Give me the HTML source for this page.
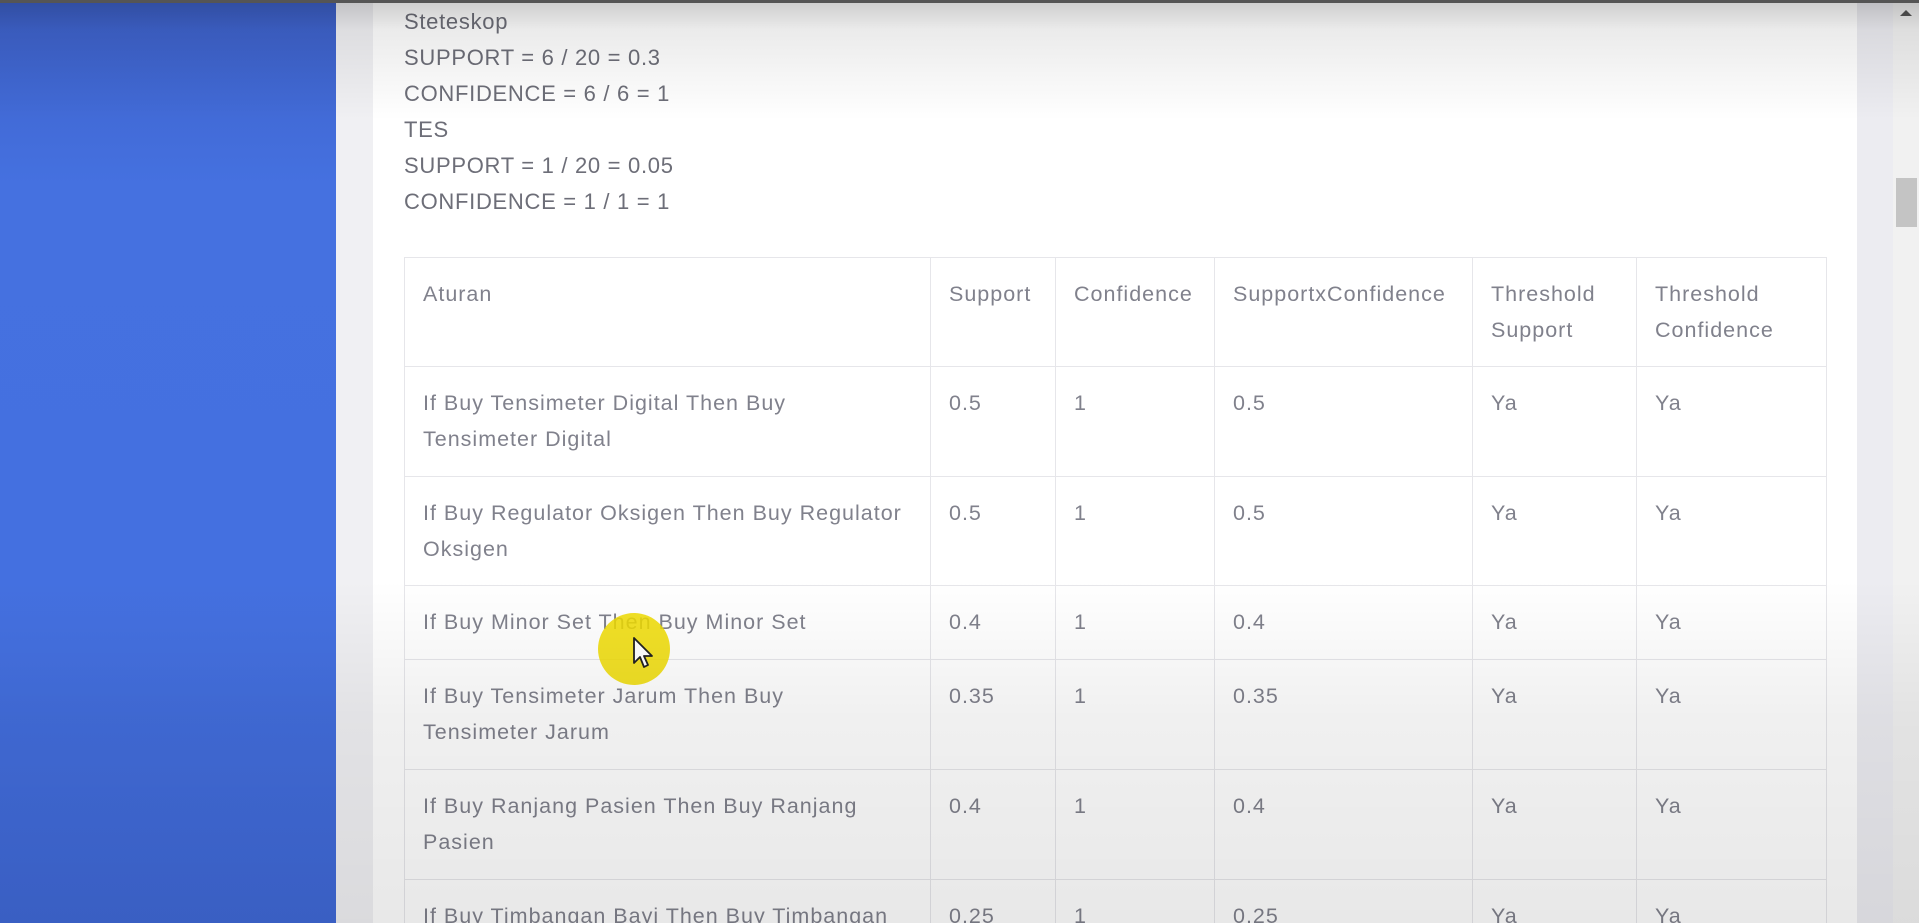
<!DOCTYPE html>
<html style="width:1919px;height:923px;overflow:hidden"><head><meta charset="utf-8"><style>
*{margin:0;padding:0;box-sizing:border-box}
body{width:1919px;height:923px;overflow:hidden;background:#f0f0f3;font-family:"Liberation Sans",sans-serif;color:#7a7b86;position:relative}
#wrap{position:absolute;left:0;top:0;width:1919px;height:923px;overflow:hidden}
.side{position:absolute;left:0;top:0;width:336px;height:923px;background:linear-gradient(180deg,#3d60c8 0%,#4571e0 20%,#4470e0 70%,#3f68d6 100%)}
.card{position:absolute;left:373px;top:0;width:1484px;height:923px;background:#fff}
.rgap{position:absolute;left:1857px;top:0;width:36px;height:923px;background:#ececf1}
.sb{position:absolute;left:1893px;top:0;width:26px;height:923px;background:#f1f1f1}
.thumb{position:absolute;left:1896px;top:178px;width:21px;height:49px;background:#c4c4c4}
.arr{position:absolute;left:1900px;top:10px;width:0;height:0;border-left:6px solid transparent;border-right:6px solid transparent;border-bottom:6px solid #555}
.txt{position:absolute;left:404px;top:4px;font-size:22px;line-height:36px;color:#6d6e78;letter-spacing:0.7px}
.tb{position:absolute;left:403px;top:256px;width:1426px;height:667px;overflow:hidden;padding:1px}
table{width:1422px;border-collapse:collapse;font-size:21.5px;color:#80818c;letter-spacing:1px;table-layout:fixed}
td{border:1.5px solid #e6e6ea;vertical-align:top;padding:18px 10px 0 18px;line-height:36px;overflow:hidden}
.topshade{position:absolute;left:0;top:0;width:1919px;height:120px;background:linear-gradient(180deg,rgba(0,0,0,.2) 0,rgba(0,0,0,.08) 30px,rgba(0,0,0,0) 120px)}
.topline{position:absolute;left:0;top:0;width:1919px;height:3px;background:#555}
.botshade{position:absolute;left:0;top:580px;width:1919px;height:343px;background:linear-gradient(180deg,rgba(0,0,0,0),rgba(0,0,0,.06) 40%,rgba(0,0,0,.09))}
.dot{position:absolute;left:598px;top:613px;width:72px;height:72px;border-radius:50%;background:rgba(240,220,0,.85)}
</style></head><body><div id="wrap">
<div class="side"></div>
<div class="card"></div>
<div class="rgap"></div>
<div class="sb"></div><div class="thumb"></div><div class="arr"></div>
<div class="txt">Steteskop<br>SUPPORT = 6 / 20 = 0.3<br>CONFIDENCE = 6 / 6 = 1<br>TES<br>SUPPORT = 1 / 20 = 0.05<br>CONFIDENCE = 1 / 1 = 1</div>
<div class="tb"><table>
<colgroup><col style="width:526px"><col style="width:125px"><col style="width:159px"><col style="width:258px"><col style="width:164px"><col style="width:190px"></colgroup>
<tr style="height:109px"><td>Aturan</td><td>Support</td><td>Confidence</td><td>SupportxConfidence</td><td>Threshold Support</td><td>Threshold Confidence</td></tr>
<tr style="height:110px"><td>If Buy Tensimeter Digital Then Buy<br>Tensimeter Digital</td><td>0.5</td><td>1</td><td>0.5</td><td>Ya</td><td>Ya</td></tr>
<tr style="height:109px"><td>If Buy Regulator Oksigen Then Buy Regulator<br>Oksigen</td><td>0.5</td><td>1</td><td>0.5</td><td>Ya</td><td>Ya</td></tr>
<tr style="height:74px"><td>If Buy Minor Set Then Buy Minor Set</td><td>0.4</td><td>1</td><td>0.4</td><td>Ya</td><td>Ya</td></tr>
<tr style="height:110px"><td>If Buy Tensimeter Jarum Then Buy<br>Tensimeter Jarum</td><td>0.35</td><td>1</td><td>0.35</td><td>Ya</td><td>Ya</td></tr>
<tr style="height:110px"><td>If Buy Ranjang Pasien Then Buy Ranjang<br>Pasien</td><td>0.4</td><td>1</td><td>0.4</td><td>Ya</td><td>Ya</td></tr>
<tr style="height:110px"><td>If Buy Timbangan Bayi Then Buy Timbangan<br>Bayi</td><td>0.25</td><td>1</td><td>0.25</td><td>Ya</td><td>Ya</td></tr>
</table></div>
<div class="dot"></div>
<svg style="position:absolute;left:632px;top:636px" width="24" height="34" viewBox="0 0 24 34"><path d="M2 2 L2 27 L8 21 L12 31 L16 29 L12 20 L20 20 Z" fill="#fff" stroke="#222" stroke-width="1.8" stroke-linejoin="round"/></svg>
<div class="topshade"></div>
<div class="botshade"></div>
<div class="topline"></div>
</div></body></html>
